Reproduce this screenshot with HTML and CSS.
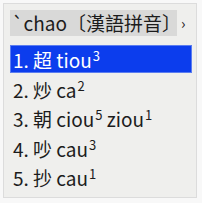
FILE: index.html
```html
<!DOCTYPE html>
<html lang="zh-Hant">
<head>
    <meta charset="UTF-8">
    <title>漢語拼音 候選字</title>
    <link rel="stylesheet" href="styles.css">
</head>
<body>
    <div class="ime">
        <div class="comp-row">
            <div class="comp">`chao〔漢語拼音〕</div>
            <span class="more">›</span>
        </div>
        <ul class="cands">
            <li class="cand active">1. 超 tiou<span class="tone">3</span></li>
            <li class="cand">2. 炒 ca<span class="tone">2</span></li>
            <li class="cand">3. 朝 ciou<span class="tone">5</span> ziou<span class="tone">1</span></li>
            <li class="cand">4. 吵 cau<span class="tone">3</span></li>
            <li class="cand">5. 抄 cau<span class="tone">1</span></li>
        </ul>
    </div>
</body>
</html>
```

FILE: styles.css
```css
body {
    margin: 0;
    background: #f8f8f8;
    font-family: "Noto Sans CJK TC", sans-serif;
    color: #1c1c1c;
}
.ime {
    margin: 3px;
    width: 194px;
    height: 195px;
    box-sizing: border-box;
    border: 1px solid #dcdcdc;
    background: #efefed;
    padding: 6px 4px 0 6px;
}
.comp-row {
    display: flex;
    align-items: center;
}
.comp {
    width: 167px;
    height: 26px;
    background: #d9d9d8;
    font-size: 19px;
    line-height: 26px;
    padding-left: 2px;
    box-sizing: border-box;
    white-space: nowrap;
}
.more {
    margin-left: 4px;
    font-size: 15px;
    line-height: 26px;
}
.cands {
    list-style: none;
    margin: 9px 0 0;
    padding: 0;
}
.cand {
    height: 29.5px;
    line-height: 29.5px;
    font-size: 19px;
    padding-left: 3px;
    white-space: nowrap;
}
.cand.active {
    height: 28px;
    line-height: 28px;
    margin-bottom: 1.5px;
    background: #0c3ded;
    color: #fff;
    border: 1px solid #5b7df0;
    box-sizing: border-box;
    padding-left: 2px;
}
.tone {
    font-size: 13px;
    vertical-align: 7px;
    line-height: 0;
    margin-left: 1px;
}
```
